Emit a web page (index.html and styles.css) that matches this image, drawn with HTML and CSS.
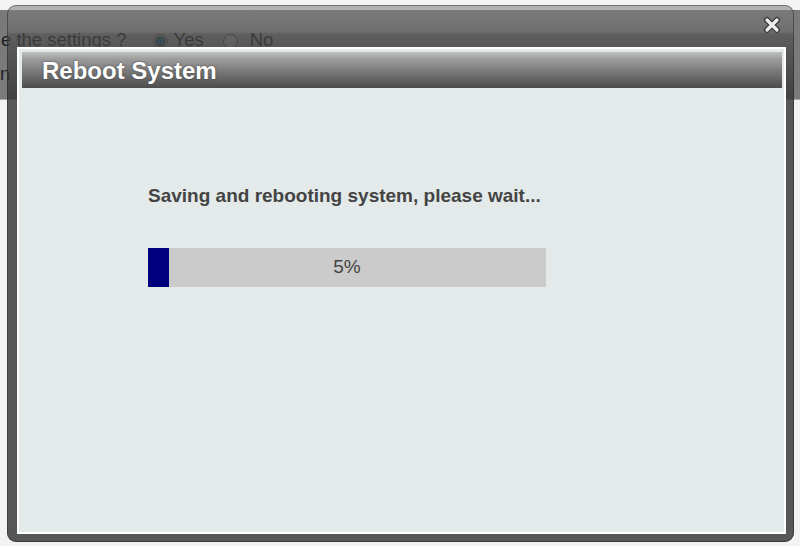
FILE: index.html
```html
<!DOCTYPE html>
<html>
<head>
<meta charset="utf-8">
<title>Reboot System</title>
<link rel="stylesheet" href="styles.css">
</head>
<body>
<div class="page">
  <div class="page-block">
    <div class="row row-first">
      <span class="q">e the settings ?</span>
      <span class="radio checked"></span><span class="opt">Yes</span>
      <span class="radio"></span><span class="opt">No</span>
    </div>
    <div class="row row-second"><span class="q">ne</span></div>
  </div>
</div>
<div class="dialog">
  <div class="dialog-top">
    <svg class="close" width="18" height="18" viewBox="0 0 18 18">
      <path d="M4 4 L14 14 M14 4 L4 14" stroke="#3a3a3a" stroke-width="6" stroke-linecap="round" fill="none"/>
      <path d="M4 4 L14 14 M14 4 L4 14" stroke="#eeeeee" stroke-width="3.2" stroke-linecap="round" fill="none"/>
    </svg>
  </div>
  <div class="panel">
    <div class="title">Reboot System</div>
    <div class="content">
      <p class="msg">Saving and rebooting system, please wait...</p>
      <div class="bar">
        <div class="fill" style="width:21px"></div>
        <div class="label">5%</div>
      </div>
    </div>
  </div>
</div>
</body>
</html>
```
FILE: styles.css
```css
html, body {
  margin: 0;
  padding: 0;
}
body {
  width: 800px;
  height: 546px;
  overflow: hidden;
  position: relative;
  background: #f3f3f3;
  font-family: "Liberation Sans", Arial, sans-serif;
}
.page {
  padding-top: 10px;
}
.page-block {
  height: 90px;
  background: #7a7a7a;
  border-bottom: 1px solid #a8a8a8;
  padding-top: 19px;
  box-sizing: border-box;
}
.row {
  display: flex;
  align-items: center;
  height: 22px;
  font-size: 18.5px;
  color: #1e1e1e;
  white-space: nowrap;
}
.row-first .q {
  margin-left: 1px;
}
.row-second {
  margin-top: 12px;
}
.row-second .q {
  margin-left: 0;
  letter-spacing: 6px;
}
.radio {
  width: 13px;
  height: 13px;
  border-radius: 50%;
  border: 1px solid #3c3c3c;
  background: #8a8a8a;
  margin-left: 27px;
  margin-right: 5px;
  margin-top: 3px;
}
.radio.checked {
  background: radial-gradient(circle, #0d3c50 0, #1b5b73 3px, #2a2a2a 4.5px, #8a8a8a 6px);
}
.row .radio + .opt + .radio {
  margin-left: 19px;
  margin-right: 12px;
}
.dialog {
  position: absolute;
  left: 7px;
  top: 5px;
  width: 787px;
  height: 537px;
  border-radius: 9px;
  box-sizing: border-box;
  display: flex;
  flex-direction: column;
  background: linear-gradient(
    rgba(125,125,125,0.55) 0,
    rgba(100,100,100,0.5) 27px,
    rgba(76,76,76,0.6) 29px,
    rgba(72,72,72,0.68) 42px,
    rgba(48,48,48,0.8) 100px,
    rgba(48,48,48,0.8) 100%);
  box-shadow: inset 0 0 0 1px rgba(30,30,30,0.45);
}
.dialog-top {
  height: 42px;
  flex: none;
  display: flex;
  justify-content: flex-end;
  align-items: flex-start;
  padding: 11px 13px 0 0;
  box-sizing: border-box;
}
.close {
  display: block;
}
.panel {
  flex: 1;
  margin: 0 8px 8px 10px;
  border: 2px solid #ffffff;
  background: #e3eae9;
  padding: 3px 2px 0 3px;
  display: flex;
  flex-direction: column;
}
.title {
  height: 36px;
  box-sizing: border-box;
  padding: 2px 0 0 20px;
  line-height: 34px;
  font-size: 24px;
  font-weight: bold;
  color: #ffffff;
  text-shadow: 0 0 2px rgba(40,40,40,0.8);
  background: linear-gradient(#c0c0c0 0, #9c9c9c 20%, #787878 55%, #4c4c4c 100%);
}
.content {
  padding: 97px 0 0 126px;
}
.msg {
  margin: 0;
  font-size: 19px;
  line-height: 22px;
  font-weight: bold;
  color: #444444;
}
.bar {
  margin-top: 41px;
  width: 398px;
  height: 39px;
  background: #cbcbcb;
  display: grid;
}
.fill, .label {
  grid-area: 1 / 1;
}
.fill {
  justify-self: start;
  height: 39px;
  background: #00007f;
}
.label {
  text-align: center;
  line-height: 37px;
  font-size: 19px;
  color: #444444;
}
```
